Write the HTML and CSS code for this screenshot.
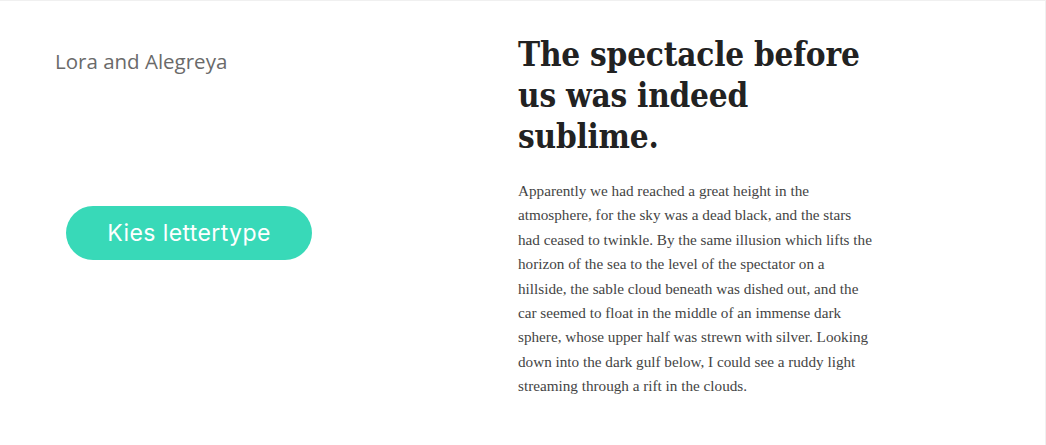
FILE: index.html
```html
<!DOCTYPE html>
<html lang="nl">
<head>
<meta charset="utf-8">
<title>Lora and Alegreya</title>
<link rel="stylesheet" href="styles.css">
</head>
<body>
<div class="frame">
  <div class="left">
    <p class="pair-name">Lora and Alegreya</p>
    <button class="pick-btn">Kies lettertype</button>
  </div>
  <div class="right">
    <h1 class="headline">The spectacle before<br>us was indeed<br>sublime.</h1>
    <p class="body-text">Apparently we had reached a great height in the<br>atmosphere, for the sky was a dead black, and the stars<br>had ceased to twinkle. By the same illusion which lifts the<br>horizon of the sea to the level of the spectator on a<br>hillside, the sable cloud beneath was dished out, and the<br>car seemed to float in the middle of an immense dark<br>sphere, whose upper half was strewn with silver. Looking<br>down into the dark gulf below, I could see a ruddy light<br>streaming through a rift in the clouds.</p>
  </div>
</div>
</body>
</html>
```
FILE: styles.css
```css
html, body {
  margin: 0;
  padding: 0;
  background: #ffffff;
}
.frame {
  box-sizing: border-box;
  width: 1046px;
  height: 445px;
  border-top: 1px solid #f0f0f0;
  border-right: 1px solid #f0f0f0;
  display: grid;
  grid-template-columns: 518px 1fr;
}
.left {
  padding-left: 55px;
  display: flex;
  flex-direction: column;
  align-items: flex-start;
}
.pair-name {
  margin: 46px 0 0 0;
  font-family: "Open Sans", sans-serif;
  font-size: 20.5px;
  line-height: 28px;
  font-weight: 400;
  color: #6a6a6a;
}
.pick-btn {
  margin: 131px 0 0 11px;
  width: 246px;
  height: 54px;
  border: none;
  border-radius: 27px;
  background: #38d9b8;
  color: #ffffff;
  font-family: "Inter", "Open Sans", sans-serif;
  font-size: 23px;
  font-weight: 400;
  padding: 0;
  letter-spacing: 0.4px;
}
.right {
  padding-top: 33px;
}
.headline {
  margin: 0;
  font-family: "DejaVu Serif Condensed", "DejaVu Serif", serif;
  font-stretch: condensed;
  font-weight: 700;
  font-size: 33px;
  line-height: 41px;
  color: #222222;
  letter-spacing: -0.2px;
}
.body-text {
  margin: 22px 0 0 0;
  font-family: "Liberation Serif", serif;
  font-size: 15.2px;
  line-height: 24.4px;
  color: #444444;
}
```
